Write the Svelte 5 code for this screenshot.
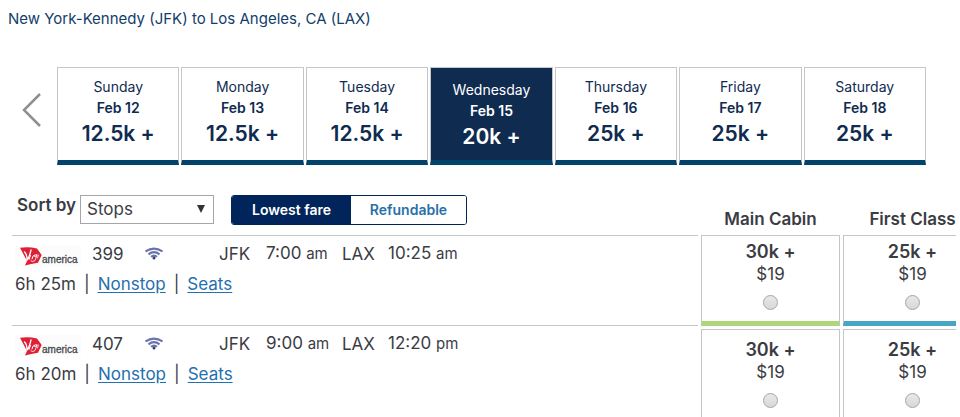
<script>
  const days = [
    { day: 'Sunday', date: 'Feb 12', miles: '12.5k +' },
    { day: 'Monday', date: 'Feb 13', miles: '12.5k +' },
    { day: 'Tuesday', date: 'Feb 14', miles: '12.5k +' },
    { day: 'Wednesday', date: 'Feb 15', miles: '20k +' },
    { day: 'Thursday', date: 'Feb 16', miles: '25k +' },
    { day: 'Friday', date: 'Feb 17', miles: '25k +' },
    { day: 'Saturday', date: 'Feb 18', miles: '25k +' },
  ];

  const flights = [
    { number: '399', depart: '7:00', departHalf: 'am', arrive: '10:25', arriveHalf: 'am', duration: '6h 25m' },
    { number: '407', depart: '9:00', departHalf: 'am', arrive: '12:20', arriveHalf: 'pm', duration: '6h 20m' },
  ];

  const cabins = [
    { id: 'main', name: 'Main Cabin', miles: '30k +', fee: '$19' },
    { id: 'first', name: 'First Class', miles: '25k +', fee: '$19' },
  ];

  let selectedDate = $state('Feb 15');
  let fareType = $state('lowest');
  let sort = $state('stops');
  let fare = $state('');
</script>

<main class="page">
  <h1>New York-Kennedy (JFK) to Los Angeles, CA (LAX)</h1>

  <nav class="calendar" aria-label="Travel dates">
    <button class="previous" aria-label="Previous dates">
      <svg viewBox="0 0 20 34" width="20" height="34" aria-hidden="true">
        <path d="M19 1 3 17l16 16" fill="none" stroke="#8d9093" stroke-width="2.5" />
      </svg>
    </button>
    <div class="days">
      {#each days as item (item.date)}
        <button
          class="day"
          class:selected={selectedDate === item.date}
          aria-pressed={selectedDate === item.date}
          onclick={() => (selectedDate = item.date)}
        >
          <span>{item.day}</span>
          <b>{item.date}</b>
          <strong>{item.miles}</strong>
        </button>
      {/each}
    </div>
  </nav>

  <div class="results">
    <section class="itineraries">
      <div class="toolbar">
        <label for="sort">Sort by</label>
        <div class="select">
          <select id="sort" bind:value={sort}>
            <option value="stops">Stops</option>
            <option value="price">Price</option>
            <option value="duration">Duration</option>
          </select>
        </div>
        <div class="toggle">
          <button class:active={fareType === 'lowest'} onclick={() => (fareType = 'lowest')}>Lowest fare</button>
          <button class:active={fareType === 'refundable'} onclick={() => (fareType = 'refundable')}>Refundable</button>
        </div>
      </div>

      {#each flights as flight (flight.number)}
        <article class="flight">
          <div class="summary">
            <svg class="logo" viewBox="0 0 66 24" width="66" height="24" role="img" aria-label="Virgin America">
              <rect y="2" width="66" height="21" fill="#fcfcfc" />
              <path d="M5 4.700Q14 3.500 22 5.500L26.700 12 23 19.700Q16 21 10 22.500L12 18Z" fill="#dc2035" />
              <g fill="none" stroke="#fff" stroke-linecap="round" stroke-linejoin="round">
                <path d="M9.500 9q2.500 2 2.500 8 2.500-3 4-10" stroke-width="1.300" />
                <path d="M15.500 12.500l-1.500 4M17 16q.5-4 2.500-4" stroke-width="1" />
                <path d="M22 11.500q-2.500-.5-2.500 2 1.500 1 2.500-1.500l-2 5.500q-2 2-4 .5M23.500 12l-1 3" stroke-width=".8" />
              </g>
              <text x="27" y="20">america</text>
            </svg>
            <span class="number">{flight.number}</span>
            <svg class="wifi" viewBox="0 0 18 13" width="18" height="13" role="img" aria-label="Wi-Fi">
              <g fill="none" stroke="#6872ac" stroke-width="2.100">
                <path d="M.5 4.500Q9-1.200 17.500 4.500" />
                <path d="M3.500 7.300Q9 3 14.500 7.300" />
                <path d="M6 9.800Q9 7.300 12 9.800" />
              </g>
              <circle cx="9" cy="11" r="1.500" fill="#343d78" />
            </svg>
            <span class="airport">JFK</span>
            <span class="time">{flight.depart} <small>{flight.departHalf}</small></span>
            <span class="airport">LAX</span>
            <span class="time">{flight.arrive} <small>{flight.arriveHalf}</small></span>
          </div>
          <div class="details">
            <span>{flight.duration}</span>
            <span>|</span>
            <a href="#stops">Nonstop</a>
            <span>|</span>
            <a href="#seats">Seats</a>
          </div>
        </article>
      {/each}
    </section>

    <section class="fares" aria-label="Fares">
      {#each cabins as cabin (cabin.id)}
        <h2>{cabin.name}</h2>
      {/each}
      {#each flights as flight, row (flight.number)}
        {#each cabins as cabin (cabin.id)}
          <label class="fare {cabin.id}" class:roomy={row > 0}>
            <strong>{cabin.miles}</strong>
            <span>{cabin.fee}</span>
            <input type="radio" name="fare" value="{flight.number}-{cabin.id}" bind:group={fare} />
          </label>
        {/each}
      {/each}
    </section>
  </div>
</main>

<style>
  :global(body) {
    margin: 0;
    background: #fff;
  }

  .page {
    box-sizing: border-box;
    height: 100vh;
    padding: 8px 4px 0 8px;
    overflow: hidden;
    color: #3b3c43;
    font-family: Inter, 'Liberation Sans', sans-serif;
    font-size: 17px;
  }

  button,
  select {
    font-family: inherit;
    cursor: pointer;
  }

  h1 {
    margin: 0;
    color: #11406b;
    font-size: 15px;
    font-weight: 400;
    line-height: 22px;
  }

  .calendar {
    display: flex;
    align-items: center;
    margin-top: 37px;
    padding: 0 30px 0 13px;
  }

  .previous {
    width: 36px;
    height: 46px;
    padding: 0 0 12px;
    border: 0;
    background: none;
    text-align: left;
  }

  .previous svg {
    display: block;
  }

  .days {
    flex: 1;
    display: grid;
    grid-template-columns: repeat(7, 1fr);
    gap: 2px;
  }

  .day {
    display: flex;
    flex-direction: column;
    align-items: center;
    height: 98px;
    padding: 8px 0 0;
    border: 1px solid #c4c6c8;
    border-bottom: 5px solid #03426a;
    background: #fff;
    color: #0f2b50;
    line-height: 21px;
  }

  .day span,
  .day b {
    font-size: 14px;
  }

  .day b {
    font-weight: 600;
  }

  .day strong {
    font-size: 21px;
    font-weight: 600;
    line-height: 31px;
  }

  .day.selected {
    padding-top: 11px;
    background: #0f2b50;
    color: #fff;
  }

  .results {
    display: flex;
    margin-top: 30px;
  }

  .itineraries {
    flex: 1;
    margin: 0 3px 0 4px;
  }

  .toolbar {
    display: flex;
    height: 40px;
    padding-left: 5px;
  }

  .toolbar label {
    width: 63px;
    font-weight: 600;
    line-height: 21px;
  }

  .select {
    position: relative;
    width: 134px;
    height: 29px;
    margin-right: 17px;
  }

  .select::after {
    position: absolute;
    top: 10px;
    right: 9px;
    width: 8px;
    height: 8px;
    background: #333;
    clip-path: polygon(0 0, 100% 0, 50% 100%);
    content: '';
    pointer-events: none;
  }

  select {
    width: 100%;
    height: 100%;
    padding: 0 6px 2px;
    border: 1px solid #a6a6a6;
    border-radius: 0;
    background: #fff;
    color: #3b3c43;
    font-size: 17px;
    appearance: none;
  }

  .toggle {
    display: grid;
    grid-template-columns: 119px 1fr;
    box-sizing: border-box;
    width: 236px;
    height: 30px;
    border: 1px solid #01245a;
    border-radius: 3px;
    overflow: hidden;
  }

  .toggle button {
    padding: 0 0 2px;
    border: 0;
    background: #fff;
    color: #2a70a8;
    font-size: 14px;
    font-weight: 600;
  }

  .toggle .active {
    background: #01245a;
    color: #fff;
  }

  .flight {
    box-sizing: border-box;
    height: 90px;
    padding: 3px 0 0 3px;
    border-top: 1px solid #c4c6c8;
    line-height: 28px;
  }

  .summary {
    display: grid;
    grid-template-columns: 77px 53px 74px 47px 76px 46px 1fr;
    align-items: center;
    height: 28px;
  }

  .logo {
    margin-top: 2px;
  }

  .logo text {
    fill: #45474d;
    stroke: #45474d;
    stroke-width: 0.3px;
    font-family: 'Liberation Sans', Arial, sans-serif;
    font-size: 10px;
  }

  small {
    font-size: 15px;
  }

  .details {
    display: flex;
    gap: 8px;
    margin-top: 3px;
  }

  a {
    color: #2470ae;
    text-underline-offset: 2px;
  }

  .fares {
    display: grid;
    grid-template-columns: 139px 139px;
    gap: 3px;
    width: 255px;
    overflow: hidden;
  }

  h2 {
    height: 37px;
    margin: 0;
    padding-top: 13px;
    box-sizing: border-box;
    font-size: 17px;
    font-weight: 600;
    line-height: 22px;
    text-align: center;
    white-space: nowrap;
  }

  .fare {
    display: flex;
    flex-direction: column;
    align-items: center;
    box-sizing: border-box;
    height: 91px;
    padding-top: 4px;
    border: 1px solid #c4c6c8;
    border-bottom: 5px solid #afd67b;
    line-height: 23px;
  }

  .fare.first {
    border-bottom-color: #48a6c5;
  }

  .fare.roomy {
    height: 99px;
    padding-top: 8px;
  }

  .fare strong {
    font-size: 18px;
    font-weight: 600;
  }

  input {
    width: 15px;
    height: 15px;
    margin: 9px 0 0;
    border: 1px solid #a5a5a5;
    border-radius: 50%;
    background: linear-gradient(#e8e8e8, #d8d8d8);
    appearance: none;
  }

  input:checked {
    background: radial-gradient(#555 30%, #e0e0e0 35%);
  }
</style>
